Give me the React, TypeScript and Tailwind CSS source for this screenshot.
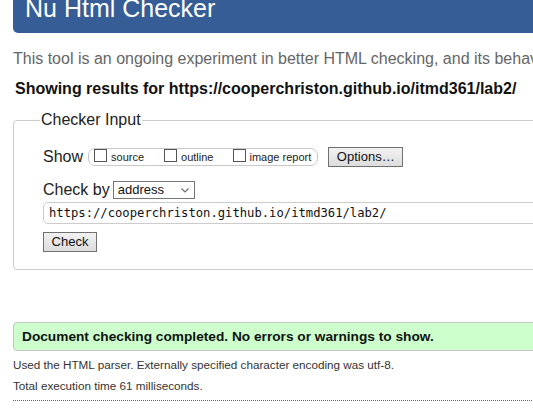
import React from 'react';

const Checkbox: React.FC<{ label: string; first?: boolean; gap?: string }> = ({ label, first = false, gap = 'ml-[4px]' }) => (
  <span className={`flex h-full ${first ? '' : 'ml-[20px]'}`}>
    <span className="block w-[13px] h-[13px] border border-[#555] bg-white self-start" />
    <span className={`${gap} text-[11px] leading-[13px] mt-[2px] text-[#222]`}>{label}</span>
  </span>
);

export default function App() {
  return (
    <div className="w-[533px] h-[418px] overflow-hidden bg-white font-['Liberation_Sans',Arial,sans-serif] text-[#222]">
      <div className="w-[580px] pl-[13px]">
        {/* Header */}
        <div className="h-[33px] bg-[#365d95] rounded-bl-[5px] overflow-hidden">
          <h1 className="pl-[12px] mt-[-4px] text-[25px] leading-[25px] text-white">Nu Html Checker</h1>
        </div>

        <p className="mt-[16px] text-[16px] leading-[20px] text-[#666] whitespace-nowrap">
          This tool is an ongoing experiment in better HTML checking, and its behavior remains subject to change
        </p>
        <p className="mt-[10px] pl-[2px] text-[16px] leading-[20px] font-bold text-[#111] whitespace-nowrap">
          Showing results for https://cooperchriston.github.io/itmd361/lab2/
        </p>

        {/* Checker Input */}
        <fieldset className="mt-[11px] border border-[#ccc] rounded-[4px] pl-[29px] pb-[17px]">
          <legend className="ml-[-3px] px-[1px] text-[16px] leading-[20px] text-[#222]">Checker Input</legend>

          <div className="mt-[17px] h-[20px] flex items-center">
            <span className="text-[16px] leading-[20px]">Show</span>
            <span className="ml-[5px] h-[18px] border border-[#c8c8c8] rounded-[7px] flex items-start pl-[5px] pr-[6px]">
              <Checkbox label="source" first />
              <Checkbox label="outline" />
              <Checkbox label="image report" gap="ml-[3px]" />
            </span>
            <button className="ml-[10px] w-[75px] h-[20px] border border-[#707070] bg-gradient-to-b from-[#f2f2f2] to-[#dddddd] text-[13px] leading-[18px] text-[#111]">
              Options…
            </button>
          </div>

          <div className="mt-[14px] h-[18px] flex items-center">
            <span className="text-[16px] leading-[18px]">Check by</span>
            <span className="ml-[3px] w-[82px] h-[18px] border border-[#767676] bg-white flex items-center justify-between pl-[4px] pr-[5px]">
              <span className="text-[13px] leading-[16px] text-[#111]">address</span>
              <svg width="8" height="5" viewBox="0 0 8 5" className="mt-[1px]">
                <path d="M0.5 0.5 L4 4 L7.5 0.5" fill="none" stroke="#707070" strokeWidth="1.2" />
              </svg>
            </span>
          </div>

          <div className="mt-[3px] h-[22px] w-[520px] border border-[#ccc] rounded-l-[5px] flex items-center pl-[5px]">
            <span className="font-['DejaVu_Sans_Mono',Consolas,monospace] text-[12.2px] leading-[16px] text-[#111]">
              https://cooperchriston.github.io/itmd361/lab2/
            </span>
          </div>

          <button className="mt-[8px] block w-[54px] h-[20px] border border-[#707070] bg-gradient-to-b from-[#f2f2f2] to-[#dddddd] text-[13px] leading-[18px] text-[#111]">
            Check
          </button>
        </fieldset>

        {/* Result */}
        <div className="mt-[52px] h-[29px] border border-[#c4c4c4] rounded-l-[4px] bg-[#ccffcc] flex items-center pl-[8px]">
          <p className="text-[13.7px] leading-[27px] font-bold text-[#111]">
            Document checking completed. No errors or warnings to show.
          </p>
        </div>

        <p className="mt-[3px] text-[11.7px] leading-[21px] text-[#333]">
          Used the HTML parser. Externally specified character encoding was utf-8.
        </p>
        <p className="text-[11.7px] leading-[21px] text-[#333]">Total execution time 61 milliseconds.</p>

        <div className="mt-[4px] border-t border-dotted border-[#666]" />
      </div>
    </div>
  );
}
